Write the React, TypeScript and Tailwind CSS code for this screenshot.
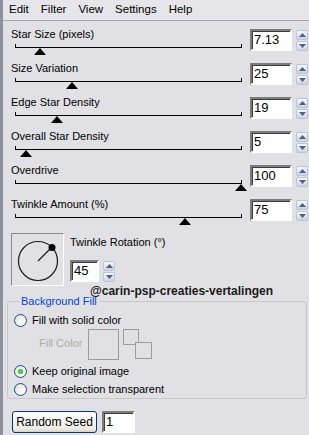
import React from "react";

const sliders = [
  { label: "Star Size (pixels)", value: "7.13", pos: 25 },
  { label: "Size Variation", value: "25", pos: 57 },
  { label: "Edge Star Density", value: "19", pos: 42 },
  { label: "Overall Star Density", value: "5", pos: 11 },
  { label: "Overdrive", value: "100", pos: 226 },
  { label: "Twinkle Amount (%)", value: "75", pos: 170 },
];

const Spin = () => (
  <div className="flex flex-col gap-px">
    {["up", "down"].map((d) => (
      <div
        key={d}
        className="flex h-[10px] w-[12px] items-center justify-center rounded-[2px] border border-[#b9c4d6] bg-[linear-gradient(#f6f8fb,#c9d3e2)]"
      >
        <svg width="7" height="4" viewBox="0 0 7 4">
          {d === "up" ? (
            <path d="M0 4 L3.5 0 L7 4 Z" fill="#4d6185" />
          ) : (
            <path d="M0 0 L3.5 4 L7 0 Z" fill="#4d6185" />
          )}
        </svg>
      </div>
    ))}
  </div>
);

const Field = ({ value, w }: { value: string; w: string }) => (
  <div
    className={`${w} h-[22px] border-2 border-t-[#7c7c7c] border-l-[#7c7c7c] border-r-white border-b-white bg-white pl-[2px] text-[13px] leading-[18px] text-black shadow-[inset_1px_1px_0_#3c3c3c]`}
  >
    {value}
  </div>
);

const Radio = ({ checked }: { checked?: boolean }) => (
  <div className="flex h-[13px] w-[13px] items-center justify-center rounded-full border border-[#1d5281] bg-[radial-gradient(circle_at_70%_70%,#ffffff,#dcdcd6)]">
    {checked && <div className="h-[5px] w-[5px] rounded-full bg-[radial-gradient(#5fe35f,#21a121)]" />}
  </div>
);

export default function App() {
  return (
    <div
      className="relative h-[435px] w-[309px] overflow-hidden border-l-[3px] border-[#8e909e] bg-[#e1e0e5] text-[11px] text-black"
      style={{ fontFamily: "Tahoma, 'Liberation Sans', Arial, sans-serif" }}
    >
      <div className="flex h-[21px] items-center gap-[12px] border-b border-[#a8a8b0] bg-[#e6e5ea] pl-[6px] text-[11.5px]">
        <span>Edit</span>
        <span>Filter</span>
        <span>View</span>
        <span>Settings</span>
        <span>Help</span>
      </div>

      <div className="pt-[3px]">
        {sliders.map((s) => (
          <div key={s.label} className="flex h-[34px]">
            <div className="w-[247px] pl-[8px]">
              <div className="mt-[3px] h-[14px] text-[11px] leading-[14px]">{s.label}</div>
              <div className="relative ml-[4px] mt-[6px] h-px w-[227px] bg-black">
                <div className="absolute -top-[3px] left-0 h-[4px] w-px bg-black" />
                <div className="absolute -top-[3px] right-0 h-[4px] w-px bg-black" />
                <svg
                  className="absolute top-px"
                  style={{ left: s.pos - 6 }}
                  width="12"
                  height="7"
                  viewBox="0 0 12 7"
                >
                  <path d="M0 7 L6 0 L12 7 Z" fill="#000" />
                </svg>
              </div>
            </div>
            <div className="mt-[5px] flex items-start gap-[4px]">
              <Field value={s.value} w="w-[42px]" />
              <div className="pt-px">
                <Spin />
              </div>
            </div>
          </div>
        ))}
      </div>

      <div className="mt-[5px] flex pl-[8px]">
        <div className="flex h-[53px] w-[53px] items-center justify-center border border-t-[#8a8a8a] border-l-[#8a8a8a] border-r-white border-b-white">
          <svg width="46" height="46" viewBox="0 0 46 46">
            <circle cx="23" cy="24" r="19.5" fill="none" stroke="#1a1a1a" strokeWidth="1.2" />
            <line x1="23" y1="24" x2="36" y2="11" stroke="#1a1a1a" strokeWidth="1.2" />
            <circle cx="37" cy="10.5" r="3.5" fill="#000" />
          </svg>
        </div>
        <div className="pl-[6px]">
          <div className="mt-[2px] h-[14px] text-[11px] leading-[14px]">Twinkle Rotation (°)</div>
          <div className="mt-[11px] flex items-start gap-[4px]">
            <Field value="45" w="w-[29px]" />
            <div className="pt-px">
              <Spin />
            </div>
          </div>
        </div>
      </div>

      <div
        className="ml-[87px] -mt-[2px] h-[14px] whitespace-nowrap text-[12px] font-bold leading-[14px] text-[#1a1a1a]"
        style={{ fontFamily: "'Liberation Sans', Arial, sans-serif" }}
      >
        @carin-psp-creaties-vertalingen
      </div>

      <fieldset className="ml-[4px] mt-[-4px] h-[105px] w-[300px] rounded-[3px] border border-[#c9c9c3] pl-[6px]">
        <legend className="ml-[5px] px-[2px] text-[11px] leading-[14px] text-[#0046d5]">Background Fill</legend>
        <div className="mt-[3px] flex h-[18px] items-center gap-[5px]">
          <Radio />
          <span className="text-[11px]">Fill with solid color</span>
        </div>
        <div className="flex h-[33px] items-start">
          <span className="ml-[25px] mt-[6px] text-[11px] text-[#acaca8]">Fill Color</span>
          <div className="ml-[6px] h-[31px] w-[31px] border border-[#9c9c9c]" />
          <div className="relative ml-[4px] h-[30px] w-[30px]">
            <div className="absolute left-0 top-0 h-[16px] w-[16px] border border-[#9c9c9c]" />
            <div className="absolute left-[12px] top-[13px] h-[17px] w-[17px] border border-[#9c9c9c] bg-[#e1e0e5]" />
          </div>
        </div>
        <div className="flex h-[18px] items-center gap-[5px]">
          <Radio checked />
          <span className="text-[11px]">Keep original image</span>
        </div>
        <div className="flex h-[18px] items-center gap-[5px]">
          <Radio />
          <span className="text-[11px]">Make selection transparent</span>
        </div>
      </fieldset>

      <div className="mt-[12px] flex items-center gap-[5px] pl-[9px]">
        <div className="flex h-[22px] w-[85px] items-center justify-center rounded-[3px] border border-[#003c74] bg-[linear-gradient(#ffffff,#ecebe6_85%,#d6d0c5)] text-[12px]">
          Random Seed
        </div>
        <Field value="1" w="w-[33px]" />
      </div>
    </div>
  );
}
